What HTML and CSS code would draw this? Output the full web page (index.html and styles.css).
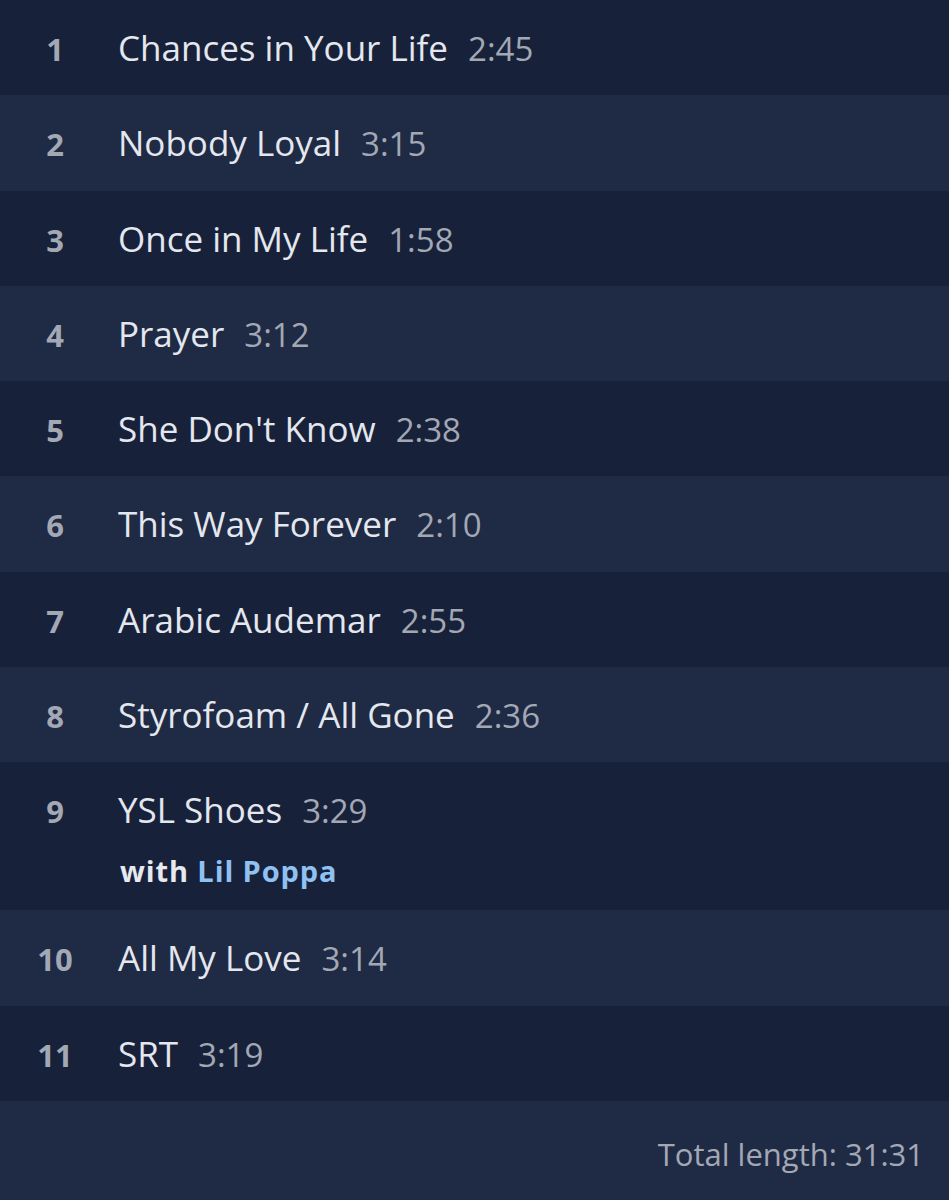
FILE: index.html
```html
<!DOCTYPE html>
<html lang="en">
<head>
<meta charset="utf-8">
<title>Tracklist</title>
<link rel="stylesheet" href="styles.css">
</head>
<body>
<main class="tracklist">
  <div class="track"><span class="num">1</span><div class="info"><div class="line"><span class="title">Chances in Your Life</span><span class="time">2:45</span></div></div></div>
  <div class="track"><span class="num">2</span><div class="info"><div class="line"><span class="title">Nobody Loyal</span><span class="time">3:15</span></div></div></div>
  <div class="track"><span class="num">3</span><div class="info"><div class="line"><span class="title">Once in My Life</span><span class="time">1:58</span></div></div></div>
  <div class="track"><span class="num">4</span><div class="info"><div class="line"><span class="title">Prayer</span><span class="time">3:12</span></div></div></div>
  <div class="track"><span class="num">5</span><div class="info"><div class="line"><span class="title">She Don't Know</span><span class="time">2:38</span></div></div></div>
  <div class="track"><span class="num">6</span><div class="info"><div class="line"><span class="title">This Way Forever</span><span class="time">2:10</span></div></div></div>
  <div class="track"><span class="num">7</span><div class="info"><div class="line"><span class="title">Arabic Audemar</span><span class="time">2:55</span></div></div></div>
  <div class="track"><span class="num">8</span><div class="info"><div class="line"><span class="title">Styrofoam / All Gone</span><span class="time">2:36</span></div></div></div>
  <div class="track track-feat"><span class="num">9</span><div class="info"><div class="line"><span class="title">YSL Shoes</span><span class="time">3:29</span></div><div class="feat">with <span class="artist">Lil Poppa</span></div></div></div>
  <div class="track"><span class="num">10</span><div class="info"><div class="line"><span class="title">All My Love</span><span class="time">3:14</span></div></div></div>
  <div class="track"><span class="num">11</span><div class="info"><div class="line"><span class="title">SRT</span><span class="time">3:19</span></div></div></div>
  <footer class="total">Total length: 31:31</footer>
</main>
</body>
</html>
```

FILE: styles.css
```css
html, body {
  margin: 0;
  padding: 0;
  background: #1f2a44;
}
body {
  font-family: "Open Sans", "Noto Sans", sans-serif;
  width: 949px;
  height: 1200px;
  overflow: hidden;
}
.tracklist {
  display: flex;
  flex-direction: column;
}
.track {
  display: flex;
  align-items: baseline;
  padding: 30px 0 0;
  height: 65.3px;
}
.track:nth-child(odd) { background: #18213a; }
.track:nth-child(even) { background: #1f2a44; }
.track-feat {
  height: 118px;
}
.num {
  width: 110px;
  flex: none;
  text-align: center;
  font-weight: 700;
  font-size: 31px;
  line-height: 36px;
  color: #a3a8b5;
}
.info {
  margin-left: 8px;
  display: flex;
  flex-direction: column;
}
.line {
  display: flex;
  align-items: baseline;
  gap: 20px;
  line-height: 36px;
}
.title {
  font-size: 35px;
  color: #e4e7ee;
}
.time {
  font-size: 33px;
  color: #a3a8b5;
}
.feat {
  margin-top: 26px;
  margin-left: 2px;
  font-size: 29px;
  letter-spacing: 0.9px;
  line-height: 32px;
  font-weight: 700;
  color: #e6e9ef;
}
.artist { color: #8fc1f3; }
.total {
  padding: 35px 25px 0 0;
  text-align: right;
  font-size: 31px;
  line-height: 36px;
  color: #a3a8b5;
}
```
